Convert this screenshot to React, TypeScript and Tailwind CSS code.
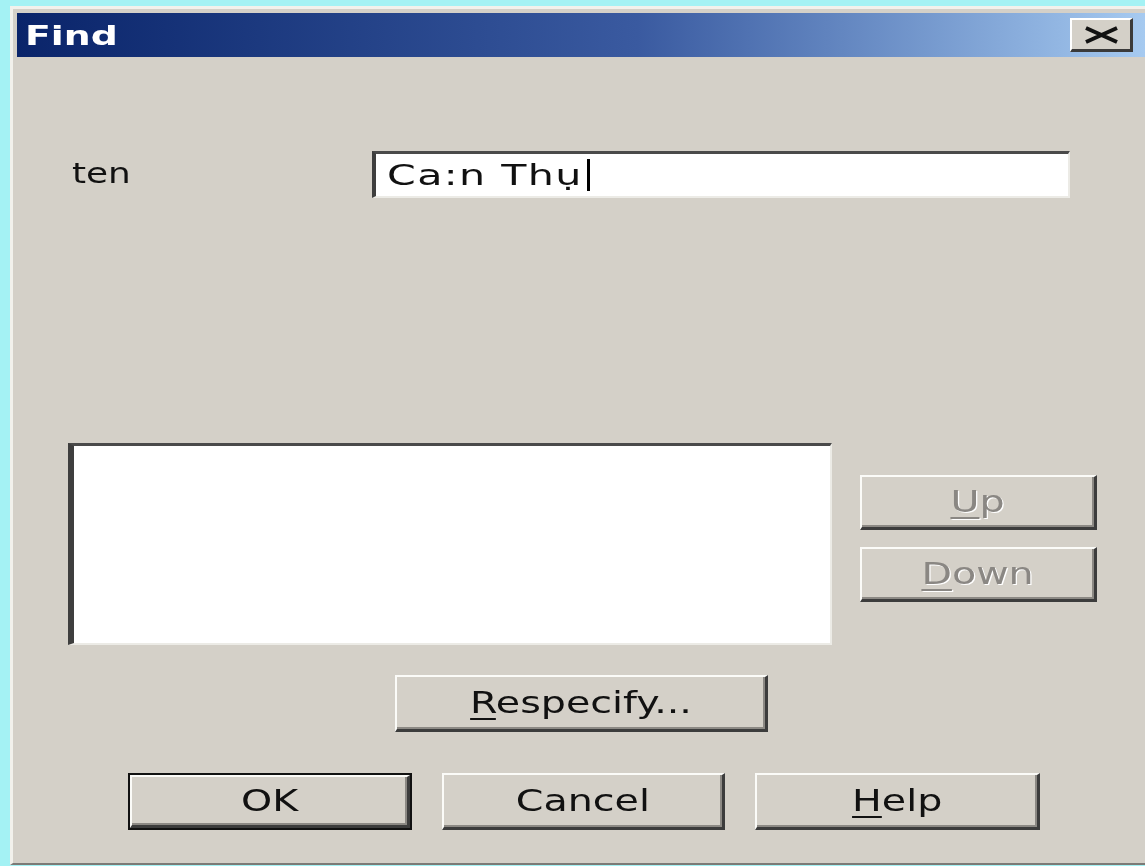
import type { ReactNode } from "react";

const sans = "font-['DejaVu_Sans',sans-serif]";

function Caption({ children, disabled }: { children: ReactNode; disabled?: boolean }) {
    return (
        <span
            className={`inline-block scale-x-[1.32] text-[30px] leading-none ${
                disabled ? "text-[#8a8783] [text-shadow:1px_1px_0_#ffffff]" : "text-[#111]"
            }`}
        >
            {children}
        </span>
    );
}

function Hot({ children }: { children: ReactNode }) {
    return <span className="underline decoration-2 underline-offset-[5px]">{children}</span>;
}

function Button({ children, className = "" }: { children: ReactNode; className?: string }) {
    return (
        <div
            className={`flex items-center justify-center bg-[#d4d0c8] border-t-2 border-l-2 border-t-[#fbfbf8] border-l-[#fbfbf8] border-b-[3px] border-r-[3px] border-b-[#3c3c3c] border-r-[#3c3c3c] shadow-[inset_-2px_-2px_0_#8c8984] ${className}`}
        >
            {children}
        </div>
    );
}

export default function App() {
    return (
        <div className={`w-[1145px] h-[866px] overflow-hidden bg-[#a4f2f4] pl-[10px] pt-[6px] ${sans}`}>
            <div className="h-[859px] w-[1150px] bg-[#d4d0c8] border-t-[3px] border-l-[3px] border-t-[#f2f1ec] border-l-[#f2f1ec] border-b-2 border-b-[#7c7a76] pl-[4px] pt-[4px] flex flex-col">
                {/* caption bar */}
                <div className="h-[44px] w-[1128px] shrink-0 flex items-center justify-between pl-[8px] pr-[12px] bg-linear-to-r from-[#0a246a] via-[#3a5aa0] via-55% to-[#a6caf0]">
                    <span className="inline-block origin-left scale-x-[1.4] text-[27px] font-bold text-white leading-none">Find</span>
                    <div className="w-[63px] h-[34px] flex items-center justify-center bg-[#d4d0c8] border-t-2 border-l-2 border-t-white border-l-white border-b-[3px] border-r-[3px] border-b-[#3a3a3a] border-r-[#3a3a3a]">
                        <svg width="37" height="18" viewBox="0 0 37 18">
                            <path d="M3 2 L34 16 M34 2 L3 16" stroke="#111" strokeWidth="4" fill="none" />
                        </svg>
                    </div>
                </div>

                {/* name field */}
                <div className="mt-[94px] ml-[55px] flex items-center h-[47px]">
                    <div className="w-[300px]">
                        <span className="inline-block origin-left scale-x-[1.28] text-[28px] leading-none text-[#111]">ten</span>
                    </div>
                    <div className="w-[698px] h-[47px] bg-white border-t-[3px] border-l-[4px] border-t-[#4a4a4a] border-l-[#3e3e3e] border-b-2 border-r-2 border-b-[#ecebe6] border-r-[#ecebe6] flex items-center pl-[11px]">
                        <span className="inline-block origin-left scale-x-[1.42] text-[29px] leading-none text-[#111] tracking-[1px]">Ca:n Thụ</span>
                        <span className="ml-[62px] w-[3px] h-[32px] bg-black" />
                    </div>
                </div>

                {/* results list with reorder buttons */}
                <div className="mt-[245px] ml-[51px] flex">
                    <div className="w-[764px] h-[202px] bg-white border-t-[3px] border-l-[6px] border-t-[#4a4a4a] border-l-[#3e3e3e] border-b-2 border-r-2 border-b-[#ecebe6] border-r-[#ecebe6]" />
                    <div className="ml-[28px] pt-[32px] flex flex-col gap-[17px]">
                        <Button className="w-[237px] h-[55px]">
                            <Caption disabled>
                                <Hot>U</Hot>p
                            </Caption>
                        </Button>
                        <Button className="w-[237px] h-[55px]">
                            <Caption disabled>
                                <Hot>D</Hot>own
                            </Caption>
                        </Button>
                    </div>
                </div>

                <div className="mt-[30px] ml-[378px]">
                    <Button className="w-[373px] h-[57px]">
                        <Caption>
                            <Hot>R</Hot>especify...
                        </Caption>
                    </Button>
                </div>

                {/* dialog actions */}
                <div className="mt-[41px] ml-[111px] flex gap-[30px]">
                    <div className="w-[284px] h-[57px] border-2 border-[#111] flex">
                        <Button className="flex-1">
                            <Caption>OK</Caption>
                        </Button>
                    </div>
                    <Button className="w-[283px] h-[57px]">
                        <Caption>Cancel</Caption>
                    </Button>
                    <Button className="w-[285px] h-[57px]">
                        <Caption>
                            <Hot>H</Hot>elp
                        </Caption>
                    </Button>
                </div>
            </div>
        </div>
    );
}
